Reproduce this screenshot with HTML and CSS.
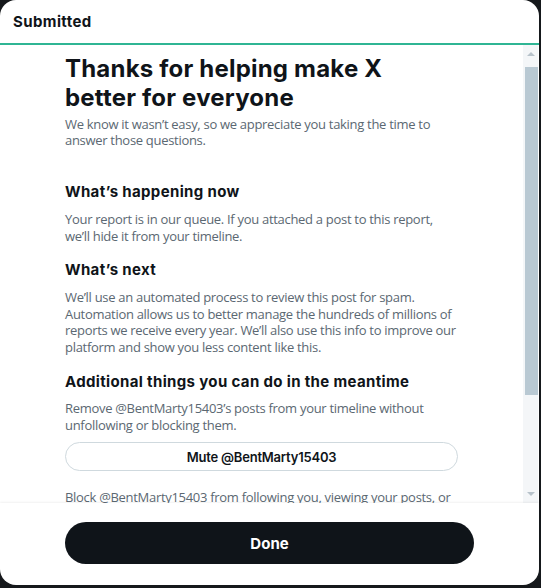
FILE: index.html
```html
<!DOCTYPE html>
<html>
<head>
<meta charset="utf-8">
<link rel="stylesheet" href="styles.css">
</head>
<body>
<div class="modal">
  <div class="header">Submitted</div>
  <div class="middle">
    <div class="scroll">
      <h1 class="title">Thanks for helping make X better for everyone</h1>
      <p class="text sub">We know it wasn’t easy, so we appreciate you taking the time to answer those questions.</p>
      <h2 class="heading first">What’s happening now</h2>
      <p class="text">Your report is in our queue. If you attached a post to this report, we’ll hide it from your timeline.</p>
      <h2 class="heading">What’s next</h2>
      <p class="text">We’ll use an automated process to review this post for spam. Automation allows us to better manage the hundreds of millions of reports we receive every year. We’ll also use this info to improve our platform and show you less content like this.</p>
      <h2 class="heading">Additional things you can do in the meantime</h2>
      <p class="text">Remove @BentMarty15403’s posts from your timeline without unfollowing or blocking them.</p>
      <button class="outline">Mute @BentMarty15403</button>
      <p class="text block">Block @BentMarty15403 from following you, viewing your posts, or interacting with you.</p>
    </div>
    <div class="scrollbar">
      <div class="arrow up"></div>
      <div class="track"><div class="thumb"></div></div>
      <div class="arrow down"></div>
    </div>
  </div>
  <div class="footer">
    <button class="done">Done</button>
  </div>
</div>
</body>
</html>
```

FILE: styles.css
```css
html, body {
  margin: 0;
  padding: 0;
  height: 100%;
}
body {
  background: #15181b;
  font-family: "Open Sans", "Noto Sans", sans-serif;
  overflow: hidden;
}
.modal {
  width: 539px;
  height: 585px;
  background: #ffffff;
  border-radius: 16px;
  display: flex;
  flex-direction: column;
  overflow: hidden;
}
.header {
  flex: none;
  height: 45px;
  box-sizing: border-box;
  padding-left: 13px;
  display: flex;
  align-items: center;
  font-family: "Inter", sans-serif;
  font-weight: 700;
  font-size: 15px;
  letter-spacing: 0.4px;
  color: #0f1419;
  border-bottom: 2px solid #2fb594;
}
.middle {
  flex: none;
  height: 458px;
  display: flex;
}
.scroll {
  flex: 1;
  overflow: hidden;
  padding: 9px 65px 0 65px;
}
.title {
  margin: 0;
  max-width: 350px;
  font-family: "Inter", sans-serif;
  font-weight: 700;
  font-size: 24px;
  line-height: 29px;
  color: #0f1419;
  letter-spacing: 0.2px;
}
.text {
  margin: 8.5px 0 0;
  font-size: 13px;
  line-height: 16.7px;
  letter-spacing: -0.3px;
  color: #5b6872;
}
.sub {
  margin-top: 3.5px;
}
.heading {
  margin: 16px 0 0;
  font-family: "Inter", sans-serif;
  font-weight: 700;
  font-size: 15px;
  line-height: 20px;
  letter-spacing: 0.35px;
  color: #0f1419;
}
.heading.first {
  margin-top: 33.5px;
}
.outline {
  display: block;
  width: 100%;
  height: 29px;
  margin-top: 8.5px;
  border: 1px solid #cfd9de;
  border-radius: 15px;
  background: #fff;
  font-family: "Inter", sans-serif;
  font-weight: 600;
  font-size: 13px;
  letter-spacing: -0.2px;
  color: #0f1419;
}
.block {
  margin-top: 17.5px;
}
.scrollbar {
  flex: none;
  width: 15px;
  margin-right: 1px;
  background: #f4f6f8;
  display: flex;
  flex-direction: column;
  align-items: center;
}
.arrow {
  width: 0;
  height: 0;
  border-left: 4px solid transparent;
  border-right: 4px solid transparent;
}
.arrow.up {
  border-bottom: 4px solid #b7c2ca;
  margin: 7px 0 11px;
}
.arrow.down {
  border-top: 4px solid #b7c2ca;
  margin: 0 0 7px;
}
.track {
  flex: 1;
  width: 100%;
  display: flex;
  justify-content: flex-end;
}
.thumb {
  width: 13px;
  height: 328px;
  background: #b9c9d3;
}
.footer {
  flex: 1;
  padding: 19px 65px 0 65px;
  box-shadow: 0 -1px 2px rgba(0,0,0,0.06);
  position: relative;
}
.done {
  display: block;
  width: 100%;
  height: 42px;
  border: none;
  border-radius: 21px;
  background: #0f1419;
  color: #ffffff;
  font-family: "Inter", sans-serif;
  font-weight: 700;
  font-size: 15px;
}
```
